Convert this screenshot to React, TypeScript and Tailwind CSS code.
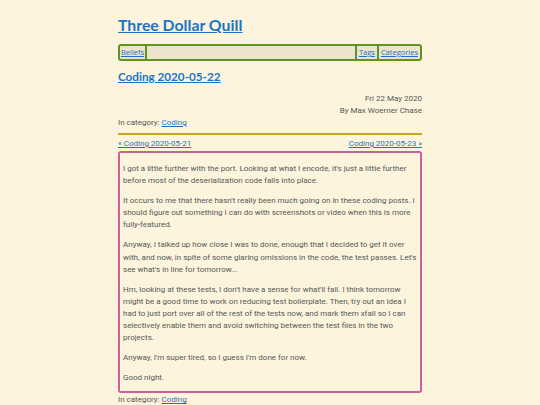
const paragraphs = [
  "I got a little further with the port. Looking at what I encode, it's just a little further before most of the deserialization code falls into place.",
  "It occurs to me that there hasn't really been much going on in these coding posts. I should figure out something I can do with screenshots or video when this is more fully-featured.",
  "Anyway, I talked up how close I was to done, enough that I decided to get it over with, and now, in spite of some glaring omissions in the code, the test passes. Let's see what's in line for tomorrow...",
  "Hm, looking at these tests, I don't have a sense for what'll fail. I think tomorrow might be a good time to work on reducing test boilerplate. Then, try out an idea I had to just port over all of the rest of the tests now, and mark them xfail so I can selectively enable them and avoid switching between the test files in the two projects.",
  "Anyway, I'm super tired, so I guess I'm done for now.",
  "Good night.",
];

const heading = "font-['Lato',sans-serif] font-bold text-[#1b74c5] underline";
const link = "text-[#1b74c5] underline";

export default function App() {
  return (
    <div className="min-h-[405px] bg-[#fcf4dc] font-['Roboto',sans-serif] text-[#585858]">
      <div className="mx-auto w-[304px] pt-[13px]">
        <h1 className={`${heading} text-[15.8px] leading-[24px]`}>
          <a href="#">Three Dollar Quill</a>
        </h1>

        <nav className="mt-[7px] flex h-[17px] items-stretch rounded-[3px] border-2 border-[#62921f] bg-[#ece4cd] font-['Open_Sans',sans-serif] text-[7.5px] leading-[13px]">
          <a href="#" className={`${link} border-r-2 border-[#62921f] px-[1px]`}>
            Beliefs
          </a>
          <div className="flex-1" />
          <a href="#" className={`${link} border-l-2 border-[#62921f] px-[2px]`}>
            Tags
          </a>
          <a href="#" className={`${link} border-l-2 border-[#62921f] px-[2px]`}>
            Categories
          </a>
        </nav>

        <h2 className={`${heading} mt-[5px] text-[11.7px] leading-[20px]`}>
          <a href="#">Coding 2020-05-22</a>
        </h2>

        <div className="mt-[7px] text-right text-[8px] leading-[12px]">
          <p>Fri 22 May 2020</p>
          <p>By Max Woerner Chase</p>
        </div>
        <p className="text-[8px] leading-[12px]">
          In category: <a href="#" className={link}>Coding</a>
        </p>

        <hr className="mt-[4px] border-0 border-t-2 border-[#c9a227]" />

        <div className="mt-[3px] flex justify-between text-[8px] leading-[12px]">
          <a href="#" className={link}>« Coding 2020-05-21</a>
          <a href="#" className={link}>Coding 2020-05-23 »</a>
        </div>

        <article className="mt-[1px] flex flex-col gap-[8px] rounded-[3px] border-2 border-[#cc5f9c] px-[3px] pt-[10px] pb-[7px] text-[8px] leading-[12.1px]">
          {paragraphs.map((p, i) => (
            <p key={i}>{p}</p>
          ))}
        </article>

        <p className="mt-[1px] text-[8px] leading-[12px]">
          In category: <a href="#" className={link}>Coding</a>
        </p>
      </div>
    </div>
  );
}
